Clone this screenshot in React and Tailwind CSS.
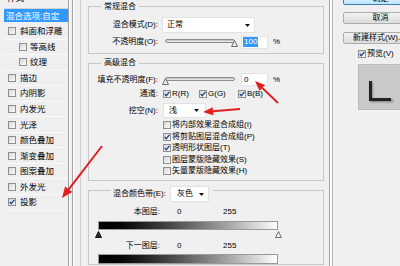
import React from "react";

const items = [
  { label: "斜面和浮雕" },
  { label: "等高线", sub: true },
  { label: "纹理", sub: true },
  { label: "描边" },
  { label: "内阴影" },
  { label: "内发光" },
  { label: "光泽" },
  { label: "颜色叠加" },
  { label: "渐变叠加" },
  { label: "图案叠加" },
  { label: "外发光" },
  { label: "投影", checked: true },
];

const options = [
  { label: "将内部效果混合成组(I)" },
  { label: "将剪贴图层混合成组(P)", checked: true },
  { label: "透明形状图层(T)", checked: true },
  { label: "图层蒙版隐藏效果(S)" },
  { label: "矢量蒙版隐藏效果(H)" },
];

function Box({ checked }) {
  return (
    <span className="relative inline-block w-[8px] h-[8px] shrink-0 border border-[#8e8f8f] bg-linear-to-br from-[#d6d6d6] to-[#fbfbfb]">
      {checked && (
        <svg className="absolute left-0 top-0" width="6" height="6" viewBox="0 0 6 6">
          <path d="M0.7 3 L2.3 4.7 L5.4 0.8" fill="none" stroke="#22418c" strokeWidth="1.3" />
        </svg>
      )}
    </span>
  );
}

function Caret() {
  return (
    <svg width="5" height="3" viewBox="0 0 5 3">
      <polygon points="0,0 5,0 2.5,3" fill="#111" />
    </svg>
  );
}

function Thumb({ dark }) {
  return (
    <svg width="7" height="7" viewBox="0 0 7 7">
      <polygon
        points="3.5,0.5 6.5,6.5 0.5,6.5"
        fill={dark ? "#2a2a2a" : "#ededed"}
        stroke={dark ? "#111" : "#707070"}
        strokeWidth="1"
      />
    </svg>
  );
}

function Slider({ thumbLeft }) {
  return (
    <div className="relative ml-[4px] w-[76px] h-[14px] shrink-0">
      <div className="ml-[3px] mt-[4px] w-[70px] h-[4px] rounded-full border border-[#8d8d8d] bg-linear-to-b from-[#b9b9b9] to-[#f4f4f4]" />
      <div className={`absolute top-[5px] ${thumbLeft}`}>
        <Thumb />
      </div>
    </div>
  );
}

function Label({ children }) {
  return <div className="w-[69px] shrink-0 text-right">{children}</div>;
}

function Arrow({ line, head }) {
  return (
    <>
      <line x1={line[0]} y1={line[1]} x2={line[2]} y2={line[3]} stroke="#e41e20" strokeWidth="2" />
      <polygon points={head} fill="#e41e20" />
    </>
  );
}

export default function App() {
  return (
    <div className="relative w-[400px] h-[266px] overflow-hidden bg-[#f0f0f0] text-[8px] leading-[10px] text-black font-['Liberation_Sans','Noto_Sans_CJK_SC',sans-serif]">
      <div className="flex h-full">
        {/* style list */}
        <div className="ml-[4px] -mt-[10px] w-[65px] shrink-0 flex flex-col border-r border-[#9c9c9c] bg-[#efefef] text-[8.5px]">
          <div className="h-[18.5px] pl-[3px] pt-[3px] border-b border-[#d4d4d4]">样式</div>
          <div className="h-[15.5px]">
            <div className="mt-[0.5px] h-[13px] flex items-center pl-[2px] bg-[#3399ff] text-white">混合选项:自定</div>
          </div>
          {items.map((it) => (
            <div
              key={it.label}
              className={`h-[15.55px] flex items-center border-b border-[#f9f9f9] ${it.sub ? "pl-[15px]" : "pl-[4px]"}`}
            >
              <Box checked={it.checked} />
              <span className={it.sub ? "ml-[3px]" : "ml-[4px]"}>{it.label}</span>
            </div>
          ))}
        </div>
        <div className="w-px shrink-0 bg-white" />
        <div className="w-[2px] shrink-0" />
        <div className="w-px shrink-0 bg-[#a5a5a5]" />
        <div className="w-px shrink-0 bg-white" />
        <div className="w-[6px] shrink-0" />
        <div className="w-px shrink-0 bg-[#cfcfcf]" />
        <div className="w-[7px] shrink-0" />

        {/* settings */}
        <div className="w-[236px] shrink-0 pt-[0.5px] flex flex-col">
          <fieldset className="border border-[#c8c8c8] pb-[4px]">
            <legend className="ml-[12px] px-[3px] h-[12px] leading-[12px]">常规混合</legend>
            <div className="mt-[4.5px] h-[16px] flex items-center">
              <Label>混合模式(D):</Label>
              <div className="ml-[4px] w-[93px] h-[16px] flex items-center justify-between pl-[4px] pr-[4px] bg-white border border-[#e2e2e2]">
                <span>正常</span>
                <Caret />
              </div>
            </div>
            <div className="mt-[2px] h-[14px] flex items-center">
              <Label>不透明度(O):</Label>
              <Slider thumbLeft="left-[69px]" />
              <div className="ml-[3px] w-[27px] h-[13px] shrink-0 flex items-center pl-[1px] bg-white border border-[#e4e4e4]">
                <span className="bg-[#3399ff] text-white px-[1px]">100</span>
              </div>
              <span className="ml-[5px]">%</span>
            </div>
          </fieldset>

          <fieldset className="mt-[3px] border border-[#c8c8c8] pb-[3.25px]">
            <legend className="ml-[12px] px-[3px] h-[12px] leading-[12px]">高级混合</legend>
            <div className="mt-[3.5px] h-[14px] flex items-center">
              <Label>填充不透明度(F):</Label>
              <Slider thumbLeft="left-[0px]" />
              <div className="ml-[3px] w-[27px] h-[13px] shrink-0 flex items-center pl-[2px] bg-white border border-[#e4e4e4]">
                0
              </div>
              <span className="ml-[5px]">%</span>
            </div>
            <div className="mt-[1.5px] h-[12px] flex items-center">
              <Label>通道:</Label>
              <div className="ml-[5px] w-[36px] shrink-0 flex items-center">
                <Box checked />
                <span className="ml-[1px]">R(R)</span>
              </div>
              <div className="w-[39px] shrink-0 flex items-center">
                <Box checked />
                <span className="ml-[1px]">G(G)</span>
              </div>
              <div className="flex items-center">
                <Box checked />
                <span className="ml-[1px]">B(B)</span>
              </div>
            </div>
            <div className="mt-[3px] h-[15px] flex items-center">
              <Label>挖空(N):</Label>
              <div className="ml-[5px] w-[43px] h-[15px] shrink-0 flex items-center justify-between pl-[5px] pr-[6px] bg-white border border-[#e2e2e2]">
                <span>浅</span>
                <Caret />
              </div>
            </div>
            <div className="mt-[1.25px] flex flex-col">
              {options.map((o) => (
                <div key={o.label} className="h-[11.5px] flex items-center pl-[74px]">
                  <Box checked={o.checked} />
                  <span className="ml-[1px]">{o.label}</span>
                </div>
              ))}
            </div>
          </fieldset>

          <fieldset className="-mt-[2px] border border-[#c8c8c8]">
            <legend className="ml-[22px] pl-[2px] pr-[4px] pt-[7px] h-[23px]">
              <div className="h-[16px] flex items-center">
                <span>混合颜色带(E):</span>
                <div className="ml-[4px] w-[39px] h-[16px] flex items-center justify-between pl-[6px] pr-[4px] bg-white border border-[#e2e2e2]">
                  <span>灰色</span>
                  <Caret />
                </div>
              </div>
            </legend>
            <div className="mt-[4px] h-[12px] flex items-center">
              <div className="w-[71px] text-right">本图层:</div>
              <span className="ml-[17px] w-[46px]">0</span>
              <span>255</span>
            </div>
            <div className="mt-[3px] ml-[9px] w-[180px] h-[9px] border border-[#9a9a9a] bg-linear-to-r from-black to-white" />
            <div className="mt-[1px] h-[7px] flex">
              <div className="ml-[6px]">
                <Thumb dark />
              </div>
              <div className="ml-[173px]">
                <Thumb />
              </div>
            </div>
            <div className="mt-[2px] h-[12px] flex items-center">
              <div className="w-[71px] text-right">下一图层:</div>
              <span className="ml-[17px] w-[46px]">0</span>
              <span>255</span>
            </div>
            <div className="mt-[2px] ml-[9px] w-[180px] h-[10px] border border-[#9a9a9a] bg-linear-to-r from-black to-white" />
          </fieldset>
        </div>

        <div className="w-[5px] shrink-0" />
        <div className="w-px shrink-0 bg-[#a8a8a8]" />
        <div className="w-[2px] shrink-0 bg-white" />
        <div className="w-px shrink-0 bg-[#b4b4b4]" />

        {/* buttons */}
        <div className="-mt-[7.5px] flex flex-col pl-[10px] shrink-0">
          <div className="w-[75px] h-[12px] flex items-center justify-center rounded-[2px] border border-[#3c7fb1] bg-linear-to-b from-[#eaf6fd] to-[#bee6fd]">确定</div>
          <div className="mt-[7.5px] w-[75px] h-[12px] flex items-center justify-center rounded-[2px] border border-[#acacac] bg-linear-to-b from-[#f2f2f2] to-[#dcdcdc]">取消</div>
          <div className="mt-[7.5px] w-[75px] h-[12px] flex items-center pl-[9px] rounded-[2px] border border-[#acacac] bg-linear-to-b from-[#f2f2f2] to-[#dcdcdc]">新建样式(W)...</div>
          <div className="mt-[6px] h-[8px] flex items-center pl-[15px]">
            <Box checked />
            <span className="ml-[1px]">预览(V)</span>
          </div>
          <div className="mt-[6.5px] ml-[15px] w-[50px] h-[46px] bg-[#c9c9c9] border border-[#bcbcbc]">
            <svg width="50" height="46" viewBox="0 0 50 46">
              <defs>
                <filter id="blur" x="-50%" y="-50%" width="200%" height="200%">
                  <feGaussianBlur stdDeviation="1.2" />
                </filter>
              </defs>
              <path d="M11 17 V37 H34 V34.5 H13.5 V17 Z" fill="#777" filter="url(#blur)" />
              <path d="M10 16 V36 H32 V33 H13 V16 Z" fill="#222" />
            </svg>
          </div>
        </div>
      </div>

      <svg className="absolute inset-0 pointer-events-none" width="400" height="266" viewBox="0 0 400 266">
        <Arrow line={[102, 146, 68.7, 189.3]} head="62,198 72.3,192 65.1,186.6" />
        <Arrow line={[278, 103, 262.2, 87.9]} head="255,81 265,85 259.5,90.8" />
        <Arrow line={[240, 109, 213, 111.2]} head="203,112 213.3,115.2 212.7,107.2" />
      </svg>
    </div>
  );
}
